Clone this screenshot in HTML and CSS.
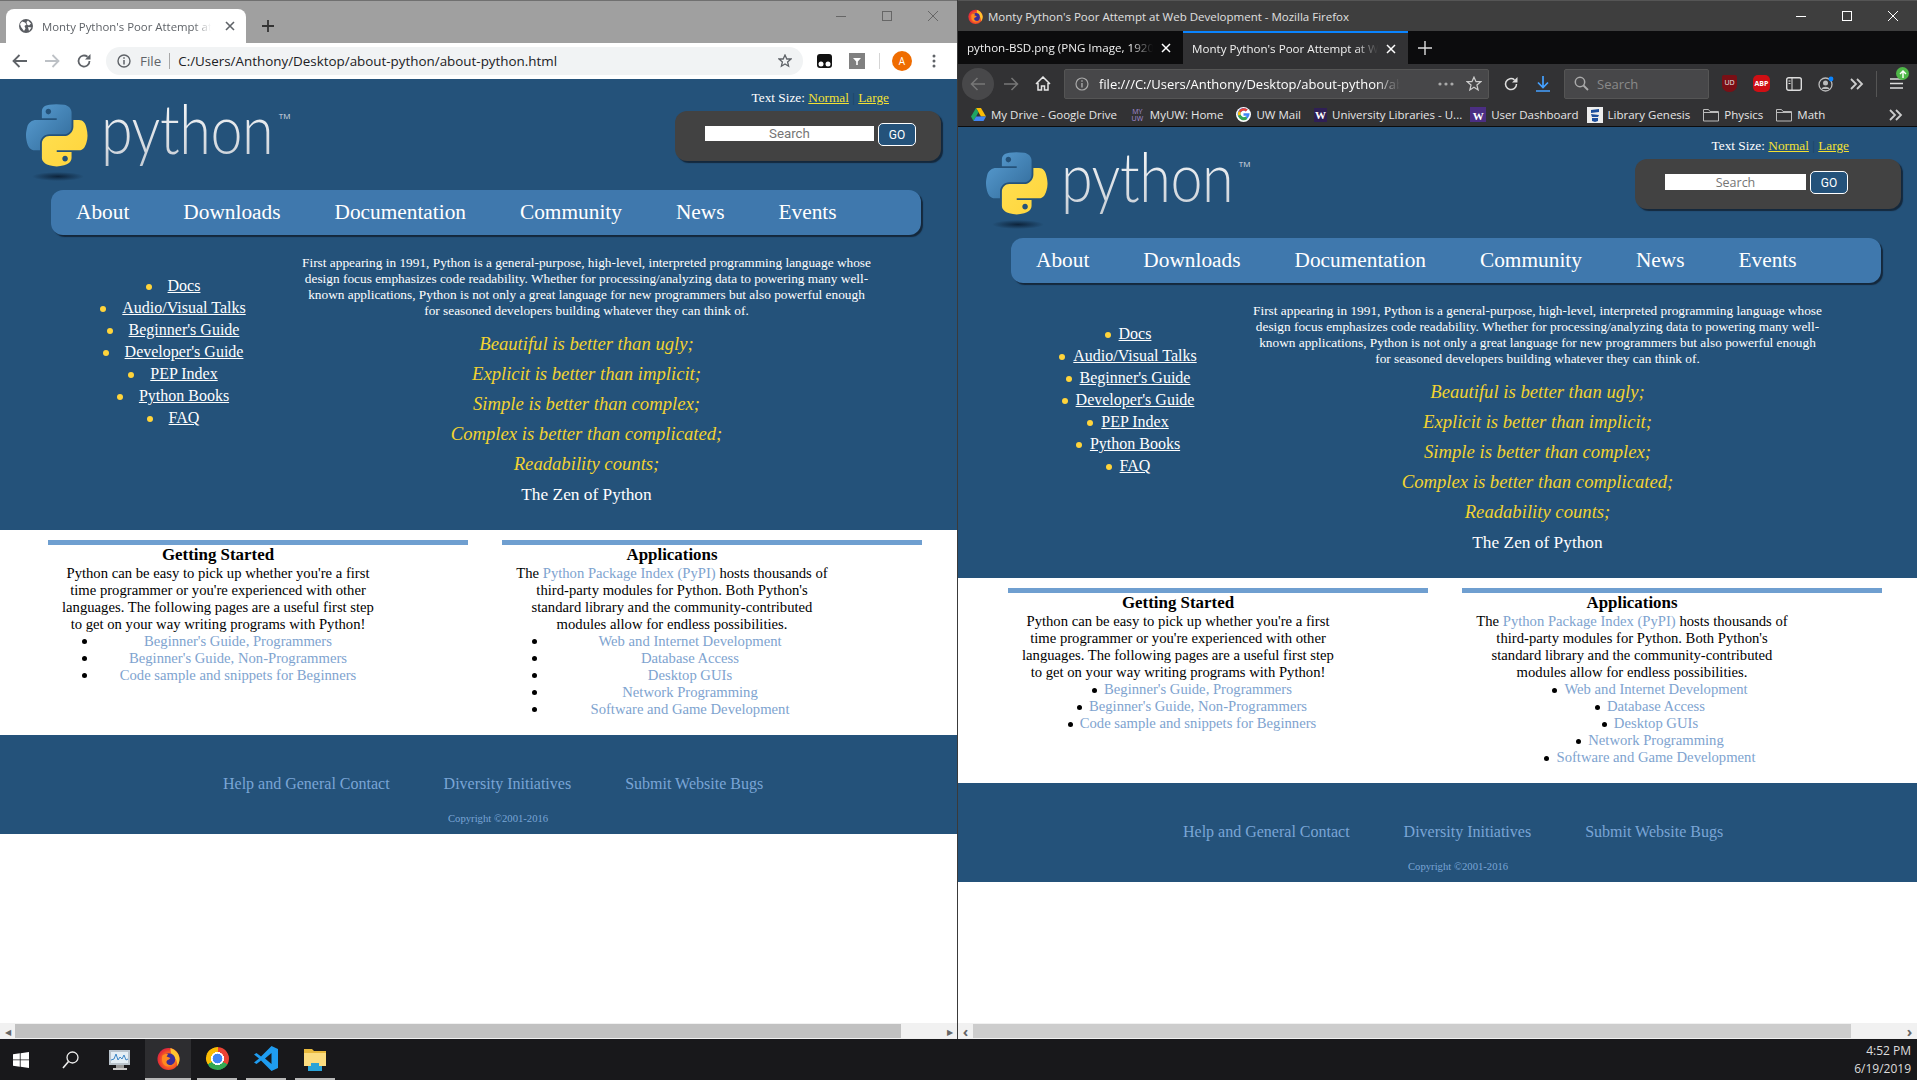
FILE: index.html
```html
<!DOCTYPE html>
<html lang="en">
<head>
    <meta charset="UTF-8">
    <title>Monty Python's Poor Attempt at Web Development</title>
    <link rel="stylesheet" href="styles.css">
</head>
<body>
    <svg class="defs" width="0" height="0">
        <defs>
            <linearGradient id="pyBlue" x1="0" y1="0" x2="1" y2="1"><stop offset="0" stop-color="#5a9fd4"/><stop offset="1" stop-color="#306998"/></linearGradient>
            <linearGradient id="pyYellow" x1="0" y1="0" x2="1" y2="1"><stop offset="0" stop-color="#ffe052"/><stop offset="1" stop-color="#ffd43b"/></linearGradient>
            <radialGradient id="foxRing" cx=".55" cy=".55" r=".6"><stop offset=".4" stop-color="#ff7a1f"/><stop offset=".8" stop-color="#e8362f"/><stop offset="1" stop-color="#d81f4e"/></radialGradient>
            <symbol id="pyLogo" viewBox="0 0 112 113">
                <path fill="url(#pyBlue)" d="M54.9 0C50.3 0 46 .4 42.1 1.1 30.8 3.1 28.7 7.3 28.7 15v10.3h26.8v3.4H18.6C10.8 28.7 4 33.3 1.9 42.3c-2.5 10.2-2.6 16.5 0 27.2C3.8 77.4 8.3 83.1 16.1 83.1h9.2V70.8c0-8.8 7.7-16.6 16.8-16.6h26.8c7.5 0 13.4-6.1 13.4-13.6V15c0-7.3-6.1-12.7-13.4-13.9C64.3.3 59.5 0 54.9 0zM40.4 8.2c2.8 0 5 2.3 5 5.1s-2.2 5.1-5 5.1-5-2.3-5-5.1 2.2-5.1 5-5.1z"/>
                <path fill="url(#pyYellow)" d="M85.6 28.7v11.9c0 9.2-7.8 17-16.7 17H42.1c-7.3 0-13.4 6.3-13.4 13.6v25.5c0 7.3 6.3 11.5 13.4 13.6 8.5 2.5 16.6 3 26.8 0 6.7-2 13.4-5.9 13.4-13.6V86.5H55.5v-3.4h40.2c7.8 0 10.7-5.4 13.4-13.6 2.8-8.4 2.7-16.5 0-27.2-1.9-7.8-5.6-13.6-13.4-13.6zM70.6 93.3c2.8 0 5 2.3 5 5.1s-2.2 5.1-5 5.1-5-2.3-5-5.1 2.2-5.1 5-5.1z"/>
            </symbol>
            <symbol id="folder" viewBox="0 0 16 14"><path d="M.5 13V1.500h5l1.500 2h8.500V13z" fill="none" stroke="#bbb"/><path d="M.5 4.500h15" stroke="#bbb"/></symbol>
            <symbol id="chevrons" viewBox="0 0 14 12"><path d="M1 1l5 5-5 5M7 1l5 5-5 5" fill="none" stroke="#ccc" stroke-width="1.800"/></symbol>
            <symbol id="firefox" viewBox="0 0 24 24">
                <circle cx="12" cy="12.500" r="11.500" fill="url(#foxRing)"/>
                <path d="M14 1c5 1.500 9.500 6 9.500 11.500 0 3-1 5.500-2.500 7.500 .5-4-1-8-4.500-10.500C15 8 14 5 14 1z" fill="#ffc42e"/>
                <circle cx="12.500" cy="13" r="6.500" fill="#3a2d96"/>
                <path d="M5.500 9c1.500-1.500 4-2 6-1.500L10 10l4 1.500-1.500 1.500c-2 .5-3 2-2.500 3.500.5 2 3 3 5.500 2.500-2.500 2-7 1.500-9-1.500C5 15 5 12 5.500 9z" fill="#ff8a1f"/>
            </symbol>
        </defs>
    </svg>

    <div class="desktop">
        <!-- chrome window -->
        <section class="win win-chrome">
            <div class="ch-titlebar">
                <div class="ch-tab">
                    <svg class="ch-globe" width="14" height="14" viewBox="0 0 14 14"><circle cx="7" cy="7" r="7" fill="#5a5d62"/><path d="M3 2.500l3 1 1.500 2L5.500 7l1 2.500L5 12 2 8 1 5zM9 1.500l3 3-2 2-2-1-.5-2.500zM9 8l3.500.5L10 12z" fill="#fff"/></svg>
                    <span class="ch-tab-title">Monty Python's Poor Attempt at Web Development</span>
                    <svg width="10" height="10" viewBox="0 0 10 10"><path d="M1 1l8 8M9 1L1 9" stroke="#5f6368" stroke-width="1.600"/></svg>
                </div>
                <svg class="ch-newtab" width="12" height="12" viewBox="0 0 12 12"><path d="M6 0v12M0 6h12" stroke="#333" stroke-width="1.800"/></svg>
                <div class="win-controls ch-controls">
                    <svg width="10" height="10" viewBox="0 0 10 10"><path d="M0 5.500h10" stroke="#666"/></svg>
                    <svg width="10" height="10" viewBox="0 0 10 10"><rect x=".5" y=".5" width="9" height="9" fill="none" stroke="#666"/></svg>
                    <svg width="10" height="10" viewBox="0 0 10 10"><path d="M0 0l10 10M10 0L0 10" stroke="#666"/></svg>
                </div>
            </div>
            <div class="ch-toolbar">
                <svg width="16" height="14" viewBox="0 0 16 14"><path d="M15 7H2M7.500 1L1.500 7l6 6" fill="none" stroke="#5f6368" stroke-width="1.800"/></svg>
                <svg width="16" height="14" viewBox="0 0 16 14"><path d="M1 7h13M8.500 1l6 6-6 6" fill="none" stroke="#bdc1c6" stroke-width="1.800"/></svg>
                <svg width="16" height="16" viewBox="0 0 16 16"><path d="M13.500 8A5.500 5.500 0 1 1 11.500 3.800" fill="none" stroke="#5f6368" stroke-width="1.800"/><path d="M14.500 1v5.500H9z" fill="#5f6368"/></svg>
                <div class="ch-omnibox">
                    <svg width="14" height="14" viewBox="0 0 14 14"><circle cx="7" cy="7" r="6" fill="none" stroke="#5f6368" stroke-width="1.400"/><path d="M7 6v4.500M7 3.200v1.600" stroke="#5f6368" stroke-width="1.500"/></svg>
                    <span class="ch-file">File</span>
                    <span class="ch-url">C:/Users/Anthony/Desktop/about-python/about-python.html</span>
                    <svg class="ch-star" width="14" height="14" viewBox="0 0 14 14"><path d="M7 1l1.800 4H13l-3.400 2.900 1 4.300L7 9.900l-3.600 2.300 1-4.300L1 5h4.200z" fill="none" stroke="#5f6368" stroke-width="1.300"/></svg>
                </div>
                <div class="ch-ext">
                    <svg width="15" height="14" viewBox="0 0 15 14"><rect width="15" height="14" rx="3" fill="#111"/><circle cx="4" cy="10" r="2.500" fill="#fff"/><circle cx="11" cy="10" r="2.500" fill="#fff"/></svg>
                    <svg width="16" height="16" viewBox="0 0 16 16"><rect width="16" height="16" fill="#808080"/><path d="M4 5h8L8.800 8.500V12H7.200V8.500z" fill="#fff"/></svg>
                    <span class="ch-divider"></span>
                    <span class="ch-avatar">A</span>
                    <svg width="4" height="14" viewBox="0 0 4 14"><circle cx="2" cy="2" r="1.500" fill="#5f6368"/><circle cx="2" cy="7" r="1.500" fill="#5f6368"/><circle cx="2" cy="12" r="1.500" fill="#5f6368"/></svg>
                </div>
            </div>

            <div class="viewport">
                <div class="page">
                    <header class="page-head">
                        <div class="brand">
                            <div class="logo-mark">
                                <svg width="62" height="63"><use href="#pyLogo"/></svg>
                                <span class="logo-shadow"></span>
                            </div>
                            <span class="wordmark">python</span><span class="tm">TM</span>
                        </div>
                        <div class="tools">
                            <p class="text-size">Text Size: <a href="#">Normal</a> <span class="sep">|</span> <a href="#">Large</a></p>
                            <form class="search">
                                <input class="search-input" type="text" placeholder="Search">
                                <button class="search-go" type="button">GO</button>
                            </form>
                        </div>
                    </header>
                    <nav class="main-nav">
                        <a href="#">About</a><a href="#">Downloads</a><a href="#">Documentation</a><a href="#">Community</a><a href="#">News</a><a href="#">Events</a>
                    </nav>
                    <main class="hero">
                        <ul class="side-links">
                            <li><a href="#">Docs</a></li>
                            <li><a href="#">Audio/Visual Talks</a></li>
                            <li><a href="#">Beginner's Guide</a></li>
                            <li><a href="#">Developer's Guide</a></li>
                            <li><a href="#">PEP Index</a></li>
                            <li><a href="#">Python Books</a></li>
                            <li><a href="#">FAQ</a></li>
                        </ul>
                        <div class="intro">
                            <p class="blurb">First appearing in 1991, Python is a general-purpose, high-level, interpreted programming language whose design focus emphasizes code readability. Whether for processing/analyzing data to powering many well-known applications, Python is not only a great language for new programmers but also powerful enough for seasoned developers building whatever they can think of.</p>
                            <p class="zen">Beautiful is better than ugly;</p>
                            <p class="zen">Explicit is better than implicit;</p>
                            <p class="zen">Simple is better than complex;</p>
                            <p class="zen">Complex is better than complicated;</p>
                            <p class="zen">Readability counts;</p>
                            <p class="zen zen-title">The Zen of Python</p>
                        </div>
                    </main>
                    <div class="columns">
                        <article class="col">
                            <h3>Getting Started</h3>
                            <p>Python can be easy to pick up whether you're a first time programmer or you're experienced with other languages. The following pages are a useful first step to get on your way writing programs with Python!</p>
                            <ul class="col-links">
                                <li><a href="#">Beginner's Guide, Programmers</a></li>
                                <li><a href="#">Beginner's Guide, Non-Programmers</a></li>
                                <li><a href="#">Code sample and snippets for Beginners</a></li>
                            </ul>
                        </article>
                        <article class="col">
                            <h3>Applications</h3>
                            <p>The <a href="#">Python Package Index (PyPI)</a> hosts thousands of third-party modules for Python. Both Python's standard library and the community-contributed modules allow for endless possibilities.</p>
                            <ul class="col-links">
                                <li><a href="#">Web and Internet Development</a></li>
                                <li><a href="#">Database Access</a></li>
                                <li><a href="#">Desktop GUIs</a></li>
                                <li><a href="#">Network Programming</a></li>
                                <li><a href="#">Software and Game Development</a></li>
                            </ul>
                        </article>
                    </div>
                    <footer class="page-foot">
                        <div class="foot-links"><a href="#">Help and General Contact</a><a href="#">Diversity Initiatives</a><a href="#">Submit Website Bugs</a></div>
                        <p class="copyright">Copyright ©2001-2016</p>
                    </footer>
                </div>
            </div>
            <div class="hscroll ch-scroll">
                <span class="arrow">&#9664;</span><span class="thumb"></span><span class="arrow">&#9654;</span>
            </div>
        </section>

        <!-- firefox window -->
        <section class="win win-firefox">
            <div class="ff-titlebar">
                <svg width="15" height="15"><use href="#firefox"/></svg>
                <span class="ff-title">Monty Python's Poor Attempt at Web Development - Mozilla Firefox</span>
                <div class="win-controls ff-controls">
                    <svg width="10" height="10" viewBox="0 0 10 10"><path d="M0 5.500h10" stroke="#fff"/></svg>
                    <svg width="10" height="10" viewBox="0 0 10 10"><rect x=".5" y=".5" width="9" height="9" fill="none" stroke="#fff"/></svg>
                    <svg width="10" height="10" viewBox="0 0 10 10"><path d="M0 0l10 10M10 0L0 10" stroke="#fff"/></svg>
                </div>
            </div>
            <div class="ff-tabs">
                <div class="ff-tab">
                    <span class="ff-tab-title">python-BSD.png (PNG Image, 1920 × 1080 pixels)</span>
                    <svg width="10" height="10" viewBox="0 0 10 10"><path d="M1 1l8 8M9 1L1 9" stroke="#fff" stroke-width="1.500"/></svg>
                </div>
                <div class="ff-tab ff-tab-active">
                    <span class="ff-tab-title">Monty Python's Poor Attempt at Web Development</span>
                    <svg width="10" height="10" viewBox="0 0 10 10"><path d="M1 1l8 8M9 1L1 9" stroke="#fff" stroke-width="1.500"/></svg>
                </div>
                <svg class="ff-newtab" width="14" height="14" viewBox="0 0 14 14"><path d="M7 0v14M0 7h14" stroke="#ddd" stroke-width="1.400"/></svg>
            </div>
            <div class="ff-toolbar">
                <span class="ff-back"><svg width="16" height="14" viewBox="0 0 16 14"><path d="M15 7H2M7.500 1L1.500 7l6 6" fill="none" stroke="#777" stroke-width="1.500"/></svg></span>
                <svg class="ff-fwd" width="16" height="14" viewBox="0 0 16 14"><path d="M1 7h13M8.500 1l6 6-6 6" fill="none" stroke="#777" stroke-width="1.500"/></svg>
                <svg class="ff-home" width="16" height="15" viewBox="0 0 16 15"><path d="M1 8l7-7 7 7M3 7v7h3.500v-4h3v4H13V7" fill="none" stroke="#e6e6e6" stroke-width="1.500"/></svg>
                <div class="ff-urlbar">
                    <svg width="14" height="14" viewBox="0 0 14 14"><circle cx="7" cy="7" r="6" fill="none" stroke="#aaa" stroke-width="1.200"/><path d="M7 6v4.500M7 3.200v1.600" stroke="#aaa" stroke-width="1.400"/></svg>
                    <span class="ff-url">file:///C:/Users/Anthony/Desktop/about-python/about-python.html</span>
                    <svg width="16" height="4" viewBox="0 0 16 4"><circle cx="2" cy="2" r="1.600" fill="#aaa"/><circle cx="8" cy="2" r="1.600" fill="#aaa"/><circle cx="14" cy="2" r="1.600" fill="#aaa"/></svg>
                    <svg width="16" height="16" viewBox="0 0 14 14"><path d="M7 1l1.800 4H13l-3.400 2.900 1 4.300L7 9.900l-3.600 2.300 1-4.300L1 5h4.200z" fill="none" stroke="#ccc" stroke-width="1.100"/></svg>
                </div>
                <svg class="ff-reload" width="16" height="16" viewBox="0 0 16 16"><path d="M13.500 8A5.500 5.500 0 1 1 11.500 3.800" fill="none" stroke="#ddd" stroke-width="1.500"/><path d="M14.500 1v5.500H9z" fill="#ddd"/></svg>
                <svg class="ff-dl" width="14" height="16" viewBox="0 0 14 16"><path d="M7 0v11M2 6.500l5 5 5-5M0 15h14" fill="none" stroke="#45a1ff" stroke-width="1.700"/></svg>
                <div class="ff-search">
                    <svg width="15" height="15" viewBox="0 0 15 15"><circle cx="6" cy="6" r="4.700" fill="none" stroke="#aaa" stroke-width="1.500"/><path d="M9.500 9.500L14 14" stroke="#aaa" stroke-width="1.800"/></svg>
                    <span>Search</span>
                </div>
                <div class="ff-addons">
                    <span class="addon-ud">UD</span>
                    <span class="addon-abp">ABP</span>
                    <svg width="16" height="14" viewBox="0 0 16 14"><rect x=".7" y=".7" width="14.600" height="12.600" rx="2" fill="none" stroke="#ddd" stroke-width="1.400"/><path d="M6 1v12M2.500 4h2M2.500 6.500h2" stroke="#ddd"/></svg>
                    <svg width="16" height="16" viewBox="0 0 16 16"><circle cx="7.500" cy="8.500" r="6.500" fill="none" stroke="#bbb" stroke-width="1.300"/><circle cx="7.500" cy="7" r="2.500" fill="#bbb"/><path d="M3.500 13c1-3 7-3 8 0" fill="#bbb"/><circle cx="13" cy="3" r="2.400" fill="#0a84ff"/></svg>
                    <svg width="14" height="12"><use href="#chevrons"/></svg>
                </div>
                <span class="ff-sep"></span>
                <div class="ff-menu">
                    <svg width="13" height="11" viewBox="0 0 13 11"><path d="M0 1h13M0 5.500h13M0 10h13" stroke="#ddd" stroke-width="1.500"/></svg>
                    <span class="ff-badge"><svg width="8" height="8" viewBox="0 0 8 8"><path d="M4 8V1M1 4l3-3 3 3" fill="none" stroke="#fff" stroke-width="1.400"/></svg></span>
                </div>
            </div>
            <div class="ff-bookmarks">
                <span class="bm"><svg width="15" height="13" viewBox="0 0 15 13"><path d="M5 0h5l5 8.500h-5z" fill="#fbbc04"/><path d="M5 0l2.500 4.300L2.500 13 0 8.500z" fill="#1fa463"/><path d="M5 8.500h10L12.500 13h-10z" fill="#4285f4"/></svg>My Drive - Google Drive</span>
                <span class="bm"><span class="ico-myuw">MY<br>UW</span>MyUW: Home</span>
                <span class="bm"><svg width="15" height="15" viewBox="0 0 15 15"><circle cx="7.500" cy="7.500" r="7.500" fill="#fff"/><path d="M7.500 6.200h6a6 6 0 1 1-1.800-3.600L9.800 4.400a3.300 3.300 0 1 0 .9 4.300H7.500z" fill="#4285f4"/><path d="M2.600 4.200A6 6 0 0 1 11.700 2.600L9.800 4.400a3.300 3.300 0 0 0-5 .9z" fill="#ea4335"/><path d="M2 8.800a6 6 0 0 1 .6-4.600l2.200 1.100a3.300 3.300 0 0 0-.1 2.700z" fill="#fbbc04"/><path d="M11.300 12.100A6 6 0 0 1 2 8.800l2.700-1.100a3.300 3.300 0 0 0 5 1.900z" fill="#34a853"/></svg>UW Mail</span>
                <span class="bm bm-tight"><span class="ico-w">W</span>University Libraries - U...</span>
                <span class="bm bm-tight"><span class="ico-w ico-w-fill">W</span>User Dashboard</span>
                <span class="bm"><svg width="16" height="16" viewBox="0 0 16 16"><rect width="16" height="16" fill="#eee"/><path d="M4 3l8-1v3L4 6zM4 7l8 1-1 2H5zM5 11h6v3l-3 1-3-1z" fill="#1c4e9c"/></svg>Library Genesis</span>
                <span class="bm"><svg width="16" height="14"><use href="#folder"/></svg>Physics</span>
                <span class="bm"><svg width="16" height="14"><use href="#folder"/></svg>Math</span>
                <svg class="bm-more" width="14" height="12"><use href="#chevrons"/></svg>
            </div>

            <div class="viewport">
                <div class="page">
                    <header class="page-head">
                        <div class="brand">
                            <div class="logo-mark">
                                <svg width="62" height="63"><use href="#pyLogo"/></svg>
                                <span class="logo-shadow"></span>
                            </div>
                            <span class="wordmark">python</span><span class="tm">TM</span>
                        </div>
                        <div class="tools">
                            <p class="text-size">Text Size: <a href="#">Normal</a> <span class="sep">|</span> <a href="#">Large</a></p>
                            <form class="search">
                                <input class="search-input" type="text" placeholder="Search">
                                <button class="search-go" type="button">GO</button>
                            </form>
                        </div>
                    </header>
                    <nav class="main-nav">
                        <a href="#">About</a><a href="#">Downloads</a><a href="#">Documentation</a><a href="#">Community</a><a href="#">News</a><a href="#">Events</a>
                    </nav>
                    <main class="hero">
                        <ul class="side-links">
                            <li><a href="#">Docs</a></li>
                            <li><a href="#">Audio/Visual Talks</a></li>
                            <li><a href="#">Beginner's Guide</a></li>
                            <li><a href="#">Developer's Guide</a></li>
                            <li><a href="#">PEP Index</a></li>
                            <li><a href="#">Python Books</a></li>
                            <li><a href="#">FAQ</a></li>
                        </ul>
                        <div class="intro">
                            <p class="blurb">First appearing in 1991, Python is a general-purpose, high-level, interpreted programming language whose design focus emphasizes code readability. Whether for processing/analyzing data to powering many well-known applications, Python is not only a great language for new programmers but also powerful enough for seasoned developers building whatever they can think of.</p>
                            <p class="zen">Beautiful is better than ugly;</p>
                            <p class="zen">Explicit is better than implicit;</p>
                            <p class="zen">Simple is better than complex;</p>
                            <p class="zen">Complex is better than complicated;</p>
                            <p class="zen">Readability counts;</p>
                            <p class="zen zen-title">The Zen of Python</p>
                        </div>
                    </main>
                    <div class="columns">
                        <article class="col">
                            <h3>Getting Started</h3>
                            <p>Python can be easy to pick up whether you're a first time programmer or you're experienced with other languages. The following pages are a useful first step to get on your way writing programs with Python!</p>
                            <ul class="col-links">
                                <li><a href="#">Beginner's Guide, Programmers</a></li>
                                <li><a href="#">Beginner's Guide, Non-Programmers</a></li>
                                <li><a href="#">Code sample and snippets for Beginners</a></li>
                            </ul>
                        </article>
                        <article class="col">
                            <h3>Applications</h3>
                            <p>The <a href="#">Python Package Index (PyPI)</a> hosts thousands of third-party modules for Python. Both Python's standard library and the community-contributed modules allow for endless possibilities.</p>
                            <ul class="col-links">
                                <li><a href="#">Web and Internet Development</a></li>
                                <li><a href="#">Database Access</a></li>
                                <li><a href="#">Desktop GUIs</a></li>
                                <li><a href="#">Network Programming</a></li>
                                <li><a href="#">Software and Game Development</a></li>
                            </ul>
                        </article>
                    </div>
                    <footer class="page-foot">
                        <div class="foot-links"><a href="#">Help and General Contact</a><a href="#">Diversity Initiatives</a><a href="#">Submit Website Bugs</a></div>
                        <p class="copyright">Copyright ©2001-2016</p>
                    </footer>
                </div>
            </div>
            <div class="hscroll ff-scroll">
                <span class="arrow">&#8249;</span><span class="thumb"></span><span class="arrow">&#8250;</span>
            </div>
        </section>
    </div>

    <!-- taskbar -->
    <div class="taskbar">
        <svg class="tb-start" width="16" height="16" viewBox="0 0 16 16"><path d="M0 2.300L6.800 1.300v6.200H0zM7.600 1.200L16 0v7.500H7.600zM0 8.300h6.800v6.400L0 13.700zM7.600 8.300H16V16l-8.400-1.200z" fill="#fff"/></svg>
        <svg class="tb-search" width="17" height="18" viewBox="0 0 17 18"><circle cx="10.500" cy="6.500" r="5.500" fill="none" stroke="#eee" stroke-width="1.300"/><path d="M6.500 10.500L1 17" stroke="#eee" stroke-width="1.600"/></svg>
        <svg class="tb-perf" width="23" height="22" viewBox="0 0 23 22"><rect x="1" y="1" width="21" height="15" fill="#b9c3cc"/><rect x="3" y="3" width="17" height="11" fill="#e4eef5"/><path d="M3 11l3-1 2-5 2 6 2-3 2 2 2-4 2 5 2-1" fill="none" stroke="#3d86c6"/><rect x="8" y="16" width="8" height="3" fill="#999"/><rect x="5" y="19" width="14" height="2" fill="#c9c9c9"/></svg>
        <span class="tb-item tb-active"><svg width="23" height="23"><use href="#firefox"/></svg></span>
        <span class="tb-item"><span class="chrome-icon"></span></span>
        <span class="tb-item"><svg width="24" height="25" viewBox="0 0 24 25"><path d="M17.500 0L24 3v19l-6.500 3L7 14.500 2.500 18 0 16.500 5 12.500 0 8.500 2.500 7 7 10.500zM17.500 7L11 12.500 17.500 18z" fill="#1f9cf0"/></svg></span>
        <span class="tb-item"><svg width="22" height="24" viewBox="0 0 22 24"><path d="M0 2h8l2 2h12v14H0z" fill="#e8b93c"/><rect y="6" width="22" height="13" fill="#fbdc7f"/><path d="M4 19v5h14v-5h-3v-3H7v3z" fill="#2aa3d8"/></svg></span>
        <div class="tb-clock">4:52 PM<br>6/19/2019</div>
    </div>
</body>
</html>
```

FILE: styles.css
```css
* {
    box-sizing: border-box;
}
html, body {
    margin: 0;
    height: 100%;
    overflow: hidden;
}
body {
    display: flex;
    flex-direction: column;
    width: 1917px;
    height: 1080px;
    background: #18181b;
    font-family: "Open Sans", "Noto Sans", sans-serif;
}
.defs {
    display: block;
    height: 0;
}
.desktop {
    display: flex;
    height: 1039px;
}
.win {
    display: flex;
    flex-direction: column;
    height: 100%;
}
.win-chrome {
    width: 958px;
    border-right: 1px solid #3a3a3a;
}
.win-firefox {
    width: 959px;
}
.win-controls {
    display: flex;
    margin-left: auto;
}

/* chrome */
.ch-titlebar {
    display: flex;
    align-items: flex-end;
    height: 43px;
    background: #a0a0a0;
    border-top: 1px solid #707070;
    padding-left: 6px;
}
.ch-tab {
    display: flex;
    align-items: center;
    width: 240px;
    height: 34px;
    padding: 0 11px 0 13px;
    background: #fff;
    border-radius: 8px 8px 0 0;
}
.ch-globe {
    flex: none;
}
.ch-tab-title {
    flex: 1;
    margin: 0 14px 0 9px;
    overflow: hidden;
    white-space: nowrap;
    font-size: 11.4px;
    color: #5f6368;
    -webkit-mask-image: linear-gradient(to right, #000 90%, transparent);
    mask-image: linear-gradient(to right, #000 90%, transparent);
}
.ch-newtab {
    margin: 0 0 11px 16px;
}
.ch-controls {
    gap: 36px;
    align-self: flex-start;
    margin-top: 10px;
    margin-right: 19px;
}
.ch-toolbar {
    display: flex;
    align-items: center;
    height: 36px;
    padding-left: 12px;
    background: #fff;
    gap: 16px;
}
.ch-omnibox {
    display: flex;
    align-items: center;
    width: 697px;
    height: 28px;
    margin-left: -2px;
    padding: 0 11px 0 11px;
    background: #f1f3f4;
    border-radius: 14px;
    font-size: 13.4px;
}
.ch-file {
    margin-left: 9px;
    padding-right: 8px;
    border-right: 1px solid #a8a8a8;
    color: #5f6368;
    line-height: 16px;
}
.ch-url {
    margin-left: 8px;
    color: #202124;
}
.ch-star {
    margin-left: auto;
}
.ch-ext {
    display: flex;
    align-items: center;
    margin-left: -2px;
}
.ch-ext svg:nth-child(2) {
    margin-left: 17px;
}
.ch-divider {
    width: 1px;
    height: 16px;
    margin: 0 12px 0 14px;
    background: #d5d5d5;
}
.ch-avatar {
    display: flex;
    align-items: center;
    justify-content: center;
    width: 20px;
    height: 20px;
    border-radius: 50%;
    background: #ef6c00;
    color: #fff;
    font-size: 10px;
}
.ch-ext svg:last-child {
    margin-left: 20px;
}

/* firefox */
.ff-titlebar {
    display: flex;
    align-items: center;
    height: 31px;
    padding-left: 10px;
    background: #3e3e3e;
    border-top: 1px solid #555;
}
.ff-title {
    margin-left: 5px;
    font-size: 11.5px;
    color: #e0e0e0;
}
.ff-controls {
    gap: 36px;
    margin-right: 19px;
}
.ff-tabs {
    display: flex;
    align-items: stretch;
    height: 33px;
    background: #0c0c0d;
}
.ff-tab {
    display: flex;
    align-items: center;
    width: 225px;
    padding: 0 12px 0 9px;
    color: #f0f0f0;
    font-size: 11.6px;
}
.ff-tab-active {
    background: #323234;
    border-top: 2px solid #0a84ff;
}
.ff-tab-title {
    flex: 1;
    overflow: hidden;
    white-space: nowrap;
    margin-right: 8px;
    -webkit-mask-image: linear-gradient(to right, #000 88%, transparent);
    mask-image: linear-gradient(to right, #000 88%, transparent);
}
.ff-newtab {
    align-self: center;
    margin-left: 10px;
}
.ff-toolbar {
    display: flex;
    align-items: center;
    height: 39px;
    padding-left: 4px;
    background: #323234;
    color: #ccc;
}
.ff-back {
    display: flex;
    align-items: center;
    justify-content: center;
    width: 32px;
    height: 32px;
    border-radius: 50%;
    background: #48484a;
}
.ff-fwd {
    margin-left: 9px;
}
.ff-home {
    margin: 0 13px 0 16px;
}
.ff-urlbar {
    display: flex;
    align-items: center;
    width: 425px;
    height: 30px;
    padding: 0 6px 0 10px;
    background: #474749;
    border: 1px solid #555;
    border-radius: 2px;
}
.ff-url {
    width: 302px;
    margin: 0 38px 0 10px;
    overflow: hidden;
    white-space: nowrap;
    font-size: 13px;
    color: #fff;
    -webkit-mask-image: linear-gradient(to right, #000 92%, transparent);
    mask-image: linear-gradient(to right, #000 92%, transparent);
}
.ff-urlbar svg:last-child {
    margin-left: 12px;
}
.ff-reload {
    margin-left: 14px;
}
.ff-dl {
    margin-left: 17px;
}
.ff-search {
    display: flex;
    align-items: center;
    width: 145px;
    height: 30px;
    margin-left: 14px;
    padding-left: 9px;
    gap: 8px;
    background: #474749;
    border: 1px solid #555;
    border-radius: 2px;
    font-size: 13px;
    color: #8a8a8a;
}
.ff-addons {
    display: flex;
    align-items: center;
    width: 150px;
    margin-left: 13px;
    gap: 16px;
}
.addon-ud {
    width: 15px;
    height: 17px;
    padding-top: 3px;
    background: #7a0f15;
    border-radius: 2px 2px 7px 7px;
    color: #eee;
    font-size: 7px;
    text-align: center;
}
.addon-abp {
    width: 17px;
    height: 17px;
    border-radius: 5px;
    background: #cf0f14;
    color: #fff;
    font-size: 7px;
    font-weight: 700;
    line-height: 17px;
    text-align: center;
}
.ff-sep {
    width: 1px;
    height: 26px;
    margin-left: 4px;
    background: #555;
}
.ff-menu {
    position: relative;
    display: flex;
    margin-left: 13px;
}
.ff-badge {
    position: absolute;
    top: -11px;
    left: 6px;
    display: flex;
    align-items: center;
    justify-content: center;
    width: 13px;
    height: 13px;
    border-radius: 50%;
    background: #4fb848;
}
.ff-bookmarks {
    display: flex;
    align-items: center;
    height: 24px;
    padding-left: 13px;
    background: #323234;
    border-bottom: 1px solid #0c0c0d;
    font-size: 11.5px;
    color: #e6e6e6;
    white-space: nowrap;
}
.bm {
    display: flex;
    align-items: center;
    gap: 5px;
    margin-right: 13px;
}
.bm-tight {
    margin-right: 8px;
}
.ico-myuw {
    width: 15px;
    font-size: 7px;
    line-height: 7px;
    color: #a58fd8;
    text-align: center;
}
.ico-w {
    width: 13px;
    height: 14px;
    background: #2f1f55;
    color: #fff;
    font-family: "Liberation Serif", serif;
    font-size: 11px;
    font-weight: 700;
    line-height: 14px;
    text-align: center;
}
.ico-w-fill {
    width: 16px;
    height: 15px;
    background: #4b2e83;
    padding-top: 2px;
}
.bm-more {
    margin-left: auto;
    margin-right: 14px;
}

/* scrollbars */
.hscroll {
    display: flex;
    align-items: center;
    height: 16px;
    background: #f1f1f1;
}
.arrow {
    flex: none;
    width: 15px;
    color: #666;
    font-size: 8px;
    text-align: center;
}
.ch-scroll .thumb {
    width: 886px;
    height: 14px;
    background: #c1c1c1;
}
.ch-scroll .arrow:last-child {
    margin-left: auto;
}
.ff-scroll .thumb {
    width: 878px;
    height: 14px;
    background: #cdcdcd;
}
.ff-scroll .arrow {
    font-size: 15px;
    font-weight: 700;
    line-height: 14px;
}
.ff-scroll .arrow:last-child {
    margin-left: auto;
}

/* python page */
.viewport {
    flex: 1;
    overflow: hidden;
    background: #fff;
}
.page {
    --shift: 0px;
    width: 957px;
    font-family: "Liberation Serif", "Times New Roman", serif;
    font-size: 16px;
    color: #000;
}
.win-firefox .page {
    --shift: 2px;
    width: 959px;
}
.page-head {
    display: flex;
    justify-content: space-between;
    height: 111px;
    padding: 0 16px 0 calc(26px + var(--shift));
    background: #24527a;
}
.brand {
    display: flex;
    align-items: flex-start;
}
.logo-mark {
    position: relative;
    width: 62px;
    margin-top: 25px;
}
.logo-mark svg {
    display: block;
}
.logo-shadow {
    position: absolute;
    left: 6px;
    top: 68px;
    width: 52px;
    height: 9px;
    border-radius: 50%;
    background: radial-gradient(closest-side, rgba(5, 20, 38, .75), transparent);
}
.wordmark {
    display: inline-block;
    margin: 9px -31px 0 13px;
    font-family: Lato, "Open Sans", sans-serif;
    font-weight: 300;
    font-size: 68px;
    line-height: 80px;
    letter-spacing: -.5px;
    background: linear-gradient(#ffffff, #c5ccd4);
    -webkit-background-clip: text;
    background-clip: text;
    color: transparent;
    transform: scaleX(.845);
    transform-origin: left;
}
.tm {
    margin: 31px 0 0 5px;
    font-family: "Open Sans", sans-serif;
    font-size: 8px;
    color: #d6dce3;
}
.tools {
    width: 266px;
}
.text-size {
    margin: 11px 52px 0 0;
    font-size: 13.3px;
    line-height: 16px;
    text-align: right;
    color: #fff;
}
.text-size a {
    color: #f2e033;
}
.text-size .sep {
    color: #1d4466;
}
.search {
    display: flex;
    align-items: flex-start;
    height: 50px;
    margin-top: 5px;
    padding: 15px 0 0 30px;
    background: #424242;
    border-radius: 12px;
    box-shadow: 2px 2px 1px #14283c;
}
.search-input {
    width: 169px;
    height: 15px;
    padding: 0;
    border: 0;
    border-radius: 0;
    background: #fff;
    font-family: Roboto, sans-serif;
    font-size: 13.3px;
    text-align: center;
}
.win-firefox .search-input {
    width: 141px;
    height: 16px;
    font-family: "Open Sans", sans-serif;
    font-size: 12.5px;
}
.search-input::placeholder {
    color: #757575;
    opacity: 1;
}
.search-go {
    width: 38px;
    height: 23px;
    margin: -3px 0 0 4px;
    padding: 0;
    background: #24527a;
    border: 1px solid #fff;
    border-radius: 5px;
    color: #fff;
    font-family: Roboto, sans-serif;
    font-size: 12px;
}
.main-nav {
    display: flex;
    align-items: center;
    position: relative;
    z-index: 1;
    width: 870px;
    height: 45px;
    margin: 0 0 -45px calc(51px + var(--shift));
    padding-left: 25px;
    gap: 54px;
    background: #3f78ad;
    border-radius: 12px;
    box-shadow: 2px 2px 1px #14283c;
}
.main-nav a {
    color: #fff;
    font-size: 21.33px;
    text-decoration: none;
}
.hero {
    display: flex;
    height: 340px;
    padding-top: 65px;
    background: #24527a;
}
.side-links {
    width: 228px;
    margin: 20px 0 0 70px;
    padding: 0;
    list-style: none;
    text-align: center;
    line-height: 22px;
}
.win-firefox .side-links {
    margin-left: 63px;
}
.side-links li::before {
    content: "";
    display: inline-block;
    width: 6px;
    height: 6px;
    margin: 0 16px 0 -22px;
    border-radius: 50%;
    background: #ffd43b;
    vertical-align: middle;
}
.win-firefox .side-links li::before {
    margin: 0 8px 0 -14px;
}
.side-links a {
    color: #fff;
}
.intro {
    width: 571px;
    margin-left: 3px;
    text-align: center;
}
.blurb {
    margin: 0 0 10px;
    font-size: 13.33px;
    line-height: 16px;
    color: #fff;
}
.zen {
    margin: 0;
    font-size: 18.67px;
    font-style: italic;
    line-height: 30px;
    color: #f2d331;
}
.zen-title {
    padding-top: 1px;
    font-size: 17.33px;
    font-style: normal;
    color: #fff;
}
.columns {
    display: flex;
    gap: 34px;
    height: 205px;
    padding: 10px 0 0 calc(48px + var(--shift));
    background: #fff;
}
.col {
    width: 420px;
    border-top: 5px solid #6f9fd0;
    font-size: 14.67px;
    line-height: 17px;
    text-align: center;
}
.col h3 {
    width: 340px;
    margin: 0;
    font-size: 16.9px;
    line-height: 19px;
}
.col p {
    width: 320px;
    margin: 1px 0 0 10px;
}
.col a {
    color: #7ea3cf;
    text-decoration: none;
}
.col-links {
    width: 340px;
    margin: 0;
    padding-left: 40px;
    list-style: none;
}
.col-links li::before {
    content: "";
    flex: none;
    display: inline-block;
    width: 5px;
    height: 5px;
    border-radius: 50%;
    background: #000;
    vertical-align: middle;
}
/* chrome keeps the bullet at the list edge, firefox hangs it beside the text */
.win-chrome .col-links li {
    display: flex;
    align-items: center;
}
.win-chrome .col-links a {
    flex: 1;
}
.win-chrome .col-links li::before {
    margin: 0 1px 0 -6px;
}
.win-chrome .col + .col .col-links {
    margin-left: -2px;
}
.win-chrome .col + .col .col-links li::before {
    margin: 0 3px 0 -8px;
}
.win-firefox .col-links li::before {
    margin: 0 7px 0 -12px;
}
.win-firefox .col + .col .col-links {
    margin-left: 4px;
}
.page-foot {
    height: 99px;
    padding-top: 40px;
    background: #24527a;
}
.foot-links {
    display: flex;
    gap: 54px;
    padding-left: calc(223px + var(--shift));
    line-height: 18px;
}
.foot-links a {
    color: #7aa5d6;
    text-decoration: none;
}
.copyright {
    width: 100px;
    margin: 19px 0 0 calc(448px + var(--shift));
    color: #7aa5d6;
    font-size: 10.67px;
    white-space: nowrap;
}

/* taskbar */
.taskbar {
    display: flex;
    align-items: center;
    height: 41px;
    background: #18181b;
    padding-left: 13px;
}
.tb-search {
    margin-left: 33px;
}
.tb-perf {
    margin: 0 14px 0 29px;
}
.tb-item {
    display: flex;
    align-items: center;
    justify-content: center;
    width: 40px;
    height: 41px;
    margin-right: 9px;
    border-bottom: 2px solid #b8b8b8;
}
.tb-active {
    width: 46px;
    margin-right: 6px;
    background: #2d2d30;
}
.chrome-icon {
    display: inline-block;
    width: 23px;
    height: 23px;
    border-radius: 50%;
    background: radial-gradient(circle, #4285f4 0 30%, #fff 31% 39%, transparent 40%), conic-gradient(from 30deg, #ea4335 0 120deg, #34a853 120deg 240deg, #fbbc04 240deg 360deg);
    transform: rotate(-30deg);
}
.tb-clock {
    margin-left: auto;
    margin-right: 6px;
    font-size: 12px;
    line-height: 18px;
    color: #ddd;
    text-align: right;
}
```
